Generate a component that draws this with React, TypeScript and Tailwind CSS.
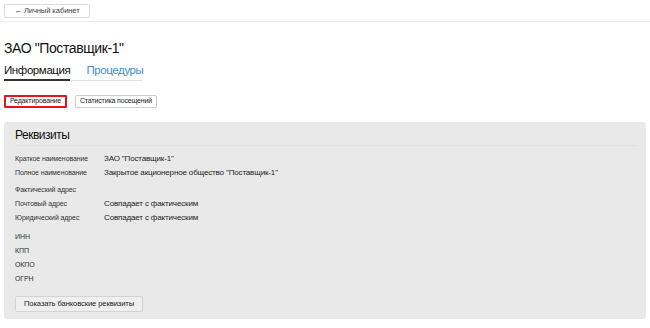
import React from "react";

const rows1 = [
  ["Краткое наименование", 'ЗАО "Поставщик-1"'],
  ["Полное наименование", 'Закрытое акционерное общество "Поставщик-1"'],
];
const rows2 = [
  ["Фактический адрес", ""],
  ["Почтовый адрес", "Совпадает с фактическим"],
  ["Юридический адрес", "Совпадает с фактическим"],
];
const rows3 = [["ИНН", ""], ["КПП", ""], ["ОКПО", ""], ["ОГРН", ""]];

function Row({ label, value }: { label: string; value: string }) {
  return (
    <div className="flex items-center h-[14px]">
      <div className="w-[89px] text-[7px] tracking-[-0.1px] text-[#333]">{label}</div>
      <div className="text-[8px] tracking-[-0.15px] text-[#222]">{value}</div>
    </div>
  );
}

export default function App() {
  return (
    <div className="w-[650px] h-[328px] bg-white overflow-hidden text-[#222]" style={{ fontFamily: '"Liberation Sans", Arial, sans-serif' }}>
      <div className="h-[22px] border-b border-[#ececec] px-[4px] pt-[4px]">
        <button className="h-[14px] w-[86px] border border-[#ddd] rounded-[2px] text-[7.6px] tracking-[-0.1px] text-[#444] flex items-center justify-center bg-white">
          ← Личный кабинет
        </button>
      </div>
      <div className="px-[4px]">
        <h1 className="mt-[17px] text-[14px] tracking-[-0.4px] leading-[18px] text-[#111]">ЗАО "Поставщик-1"</h1>
        <div className="mt-[6px] flex w-[139px] border-b border-[#e2e2e2]">
          <div className="text-[11.5px] tracking-[-0.4px] leading-[15px] pb-[1px] border-b-2 border-[#333] mb-[-1px] w-[67px] text-[#111]">Информация</div>
          <div className="ml-[16px] text-[11.5px] tracking-[-0.4px] leading-[15px] text-[#3d8fd1]">Процедуры</div>
        </div>
        <div className="mt-[14px] flex gap-[8px]">
          <button className="h-[13px] w-[63px] border-2 border-[#e3161b] rounded-[1px] text-[7px] tracking-[-0.15px] text-[#222] flex items-center justify-center bg-white">Редактирование</button>
          <button className="h-[13px] w-[82px] border border-[#ccc] rounded-[2px] text-[7px] tracking-[-0.15px] text-[#222] flex items-center justify-center bg-white">Статистика посещений</button>
        </div>
        <div className="mt-[14px] bg-[#e9e9e9] rounded-[3px] h-[197px] pl-[11px] pr-[9px] pt-[5px] w-[642px]">
          <div className="text-[12px] tracking-[-0.5px] leading-[16px] text-[#111] pb-[2px] border-b border-[#e2e2e2]">Реквизиты</div>
          <div className="mt-[6px]">
            {rows1.map(([l, v]) => <Row key={l} label={l} value={v} />)}
          </div>
          <div className="mt-[3px]">
            {rows2.map(([l, v]) => <Row key={l} label={l} value={v} />)}
          </div>
          <div className="mt-[5px]">
            {rows3.map(([l, v]) => <Row key={l} label={l} value={v} />)}
          </div>
          <button className="mt-[10px] h-[16px] w-[128px] border border-[#d4d4d4] rounded-[2px] bg-[#efefef] text-[7.6px] tracking-[-0.1px] text-[#222] flex items-center justify-center">Показать банковские реквизиты</button>
        </div>
      </div>
    </div>
  );
}
